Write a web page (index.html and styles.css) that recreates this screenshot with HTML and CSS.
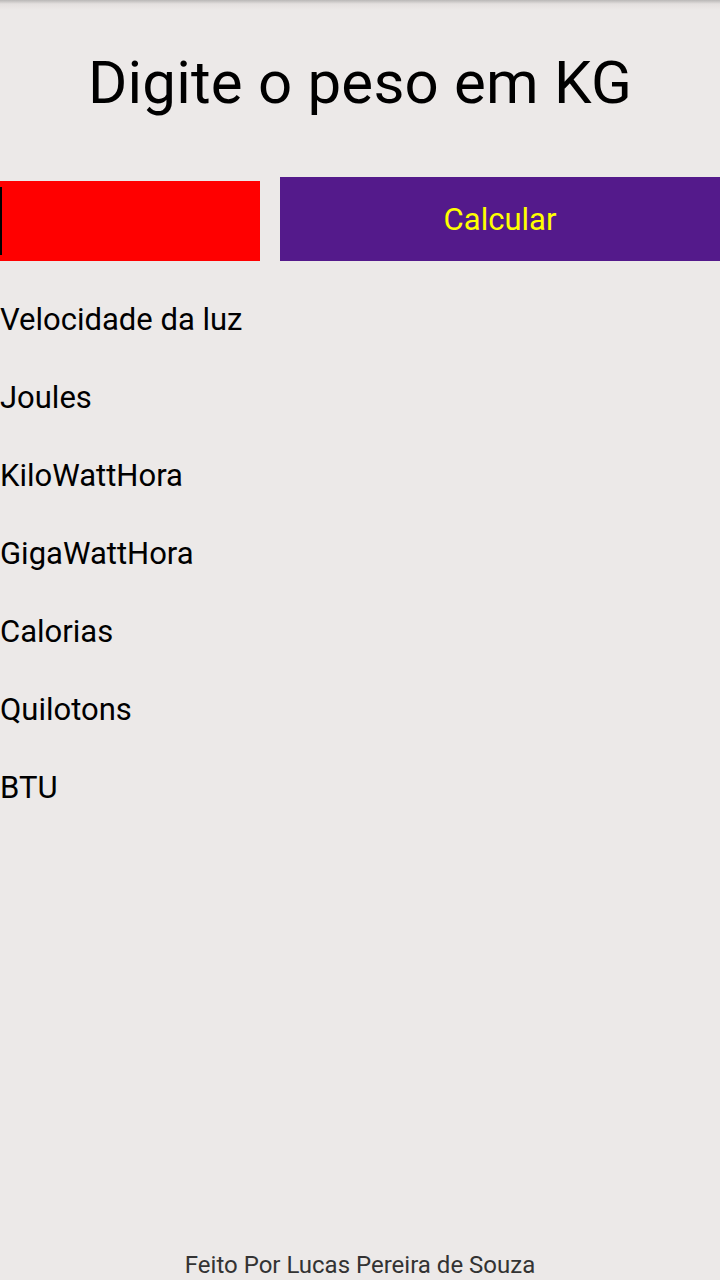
FILE: index.html
```html
<!DOCTYPE html>
<html lang="pt">
<head>
<meta charset="utf-8">
<title>Conversor</title>
<link rel="stylesheet" href="styles.css">
</head>
<body>
<main class="app">
  <h1 class="title">Digite o peso em KG</h1>
  <div class="form-row">
    <div class="field"><span class="cursor"></span></div>
    <button class="calc-btn">Calcular</button>
  </div>
  <ul class="results">
    <li>Velocidade da luz</li>
    <li>Joules</li>
    <li>KiloWattHora</li>
    <li>GigaWattHora</li>
    <li>Calorias</li>
    <li>Quilotons</li>
    <li>BTU</li>
  </ul>
  <footer class="footer">Feito Por Lucas Pereira de Souza</footer>
</main>
</body>
</html>
```
FILE: styles.css
```css
html, body {
  margin: 0;
  padding: 0;
}
body {
  background: linear-gradient(#b9b7b6 0px, #e4e0df 4px, #ece9e8 10px) no-repeat, #ece9e8;
  font-family: Roboto, "Noto Sans", sans-serif;
  color: #000;
}
.app {
  display: flex;
  flex-direction: column;
  min-height: 1280px;
  box-sizing: border-box;
}
.title {
  margin: 0;
  padding-top: 48px;
  font-size: 60px;
  font-weight: 400;
  letter-spacing: 0.2px;
  text-align: center;
  line-height: 70px;
}
.form-row {
  display: flex;
  align-items: flex-end;
  gap: 20px;
  margin-top: 59px;
}
.field {
  width: 260px;
  height: 80px;
  background: #ff0000;
  display: flex;
  align-items: center;
}
.cursor {
  width: 2px;
  height: 68px;
  background: #000;
}
.calc-btn {
  flex: 1;
  height: 84px;
  border: 0;
  margin: 0;
  padding: 0;
  background: #541a8b;
  color: #ffff00;
  font-family: Roboto, "Noto Sans", sans-serif;
  font-size: 31px;
}
.results {
  list-style: none;
  margin: 20px 0 0;
  padding: 0;
}
.results li {
  font-size: 31px;
  line-height: 78px;
}
.footer {
  margin-top: auto;
  text-align: center;
  font-size: 24px;
  line-height: 28px;
  color: #333;
  padding-bottom: 1px;
}
```
